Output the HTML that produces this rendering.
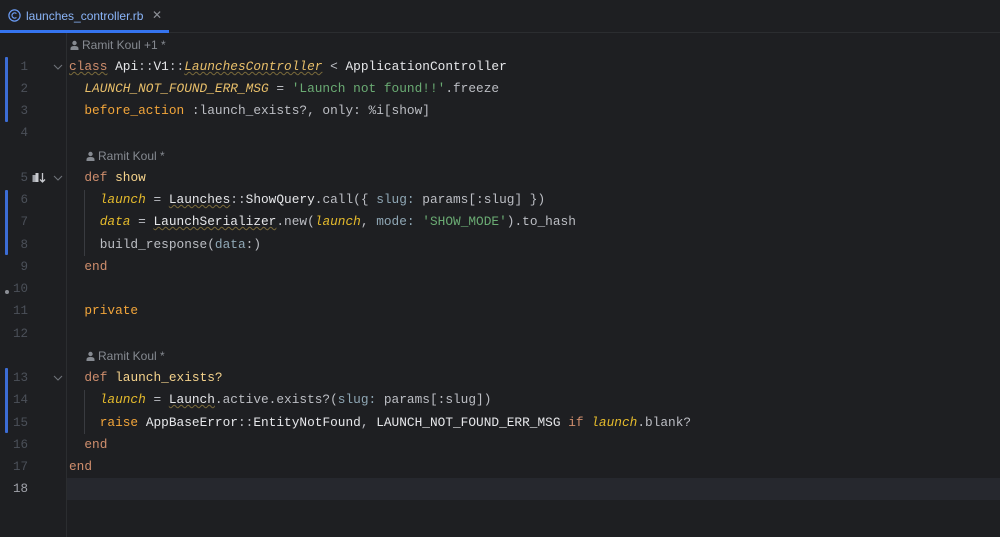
<!DOCTYPE html>
<html><head><meta charset="utf-8"><style>
*{margin:0;padding:0;box-sizing:border-box}
body{width:1000px;height:537px;background:#1e1f22;overflow:hidden;position:relative;font-family:"Liberation Mono",monospace;font-size:12.8px;color:#bcbec4}
.tabbar{position:absolute;left:0;top:0;width:1000px;height:33px;background:#1e1f22;border-bottom:1px solid #2b2d30}
.tab{position:absolute;left:0;top:0;width:169px;height:33px;border-bottom:3px solid #3574f0}
.tab .t{position:absolute;left:26px;top:9px;font-family:"Liberation Sans",sans-serif;font-size:12px;color:#8ab4f8}
.tab .x{position:absolute;left:152px;top:8px;font-family:"Liberation Sans",sans-serif;font-size:12px;color:#8c8f96}
.gutline{position:absolute;left:66px;top:33px;width:1px;height:504px;background:#2b2d30}
.row{position:absolute;left:0;width:1000px;height:22.2px;line-height:22.2px;white-space:pre}
.num{position:absolute;left:0;width:28px;text-align:right;color:#4b5059;font-size:12.5px}
.code{position:absolute;left:69px}
.hint{position:absolute;font-family:"Liberation Sans",sans-serif;font-size:12px;color:#868a91}
.bar{position:absolute;left:5px;width:3px;background:#3c6dd6;border-radius:1px}
.fold{position:absolute;left:53px;top:8px}
.k{color:#cf8e6d}.c{color:#e8bf6a;font-style:italic}.s{color:#6aab73}.m{color:#f2a53a}
.w{color:#e6e7ea}.v{color:#e5bb2c;font-style:italic}.n{color:#8fa7b5}.f{color:#f5d38c}
.u{text-decoration:underline wavy #7a6a3a;text-decoration-thickness:1px}
.cur{background:#26282e}
.guide{position:absolute;left:84px;width:1px;background:#393b40}
.pi{display:inline-block;vertical-align:-1px;margin-right:3px}
</style></head><body>
<div class="tabbar"><div class="tab">
<svg style="position:absolute;left:8px;top:9px" width="13" height="13" viewBox="0 0 13 13"><circle cx="6.5" cy="6.5" r="5.6" fill="none" stroke="#6b9cf5" stroke-width="1.2"/><path d="M8.4 4.6A2.6 2.6 0 1 0 8.4 8.4" fill="none" stroke="#6b9cf5" stroke-width="1.2"/></svg>
<span class="t">launches_controller.rb</span><span class="x">✕</span></div></div>
<div class="gutline"></div>
<div class="bar" style="top:57px;height:65px"></div>
<div class="bar" style="top:190px;height:65px"></div>
<div class="bar" style="top:368px;height:65px"></div>
<div class="guide" style="top:190px;height:66px"></div>
<div class="guide" style="top:390px;height:44px"></div>

<div class="row" style="top:34px"><span class="hint" style="left:70px"><svg class="pi" width="9" height="10" viewBox="0 0 9 10"><circle cx="4.5" cy="3" r="2.2" fill="#868a91"/><path d="M0.5 10V8.5Q0.5 6 4.5 6Q8.5 6 8.5 8.5V10Z" fill="#868a91"/></svg>Ramit Koul +1 *</span></div>
<div class="row" style="top:56px"><span class="num">1</span><svg class="fold" width="10" height="6" viewBox="0 0 10 6"><path d="M1 1L5 5L9 1" fill="none" stroke="#6f737a" stroke-width="1.1"/></svg><span class="code"><span class="k u">class</span> <span class="w">Api</span>::<span class="w">V1</span>::<span class="c u">LaunchesController</span> &lt; <span class="w">ApplicationController</span></span></div>
<div class="row" style="top:78px"><span class="num">2</span><span class="code">  <span class="c">LAUNCH_NOT_FOUND_ERR_MSG</span> = <span class="s">'Launch not found!!'</span>.freeze</span></div>
<div class="row" style="top:100px"><span class="num">3</span><span class="code">  <span class="m">before_action</span> :launch_exists?, only: %i[show]</span></div>
<div class="row" style="top:122px"><span class="num">4</span></div>
<div class="row" style="top:145px"><span class="hint" style="left:86px"><svg class="pi" width="9" height="10" viewBox="0 0 9 10"><circle cx="4.5" cy="3" r="2.2" fill="#868a91"/><path d="M0.5 10V8.5Q0.5 6 4.5 6Q8.5 6 8.5 8.5V10Z" fill="#868a91"/></svg>Ramit Koul *</span></div>
<div class="row" style="top:167px"><span class="num">5</span><svg style="position:absolute;left:32px;top:5px" width="14" height="12" viewBox="0 0 14 12"><rect x="0.5" y="3" width="3" height="7" fill="#a0a3a9"/><rect x="3.5" y="1" width="3" height="9" fill="#c8cacf"/><path d="M10.5 1V10M8 7.5L10.5 10L13 7.5" fill="none" stroke="#c8cacf" stroke-width="1.3"/></svg><svg class="fold" width="10" height="6" viewBox="0 0 10 6"><path d="M1 1L5 5L9 1" fill="none" stroke="#6f737a" stroke-width="1.1"/></svg><span class="code">  <span class="k">def</span> <span class="f">show</span></span></div>
<div class="row" style="top:189px"><span class="num">6</span><span class="code">    <span class="v">launch</span> = <span class="w u">Launches</span>::<span class="w">ShowQuery</span>.call({ <span class="n">slug:</span> params[:slug] })</span></div>
<div class="row" style="top:211px"><span class="num">7</span><span class="code">    <span class="v">data</span> = <span class="w u">LaunchSerializer</span>.new(<span class="v">launch</span>, <span class="n">mode:</span> <span class="s">'SHOW_MODE'</span>).to_hash</span></div>
<div class="row" style="top:234px"><span class="num">8</span><span class="code">    build_response(<span class="n">data</span>:)</span></div>
<div class="row" style="top:256px"><span class="num">9</span><span class="code">  <span class="k">end</span></span></div>
<div class="row" style="top:278px"><span class="num">10</span><span style="position:absolute;left:5px;top:12px;width:4px;height:4px;border-radius:2px;background:#8c8f96"></span></div>
<div class="row" style="top:300px"><span class="num">11</span><span class="code">  <span class="m">private</span></span></div>
<div class="row" style="top:323px"><span class="num">12</span></div>
<div class="row" style="top:345px"><span class="hint" style="left:86px"><svg class="pi" width="9" height="10" viewBox="0 0 9 10"><circle cx="4.5" cy="3" r="2.2" fill="#868a91"/><path d="M0.5 10V8.5Q0.5 6 4.5 6Q8.5 6 8.5 8.5V10Z" fill="#868a91"/></svg>Ramit Koul *</span></div>
<div class="row" style="top:367px"><span class="num">13</span><svg class="fold" width="10" height="6" viewBox="0 0 10 6"><path d="M1 1L5 5L9 1" fill="none" stroke="#6f737a" stroke-width="1.1"/></svg><span class="code">  <span class="k">def</span> <span class="f">launch_exists?</span></span></div>
<div class="row" style="top:389px"><span class="num">14</span><span class="code">    <span class="v">launch</span> = <span class="w u">Launch</span>.active.exists?(<span class="n">slug:</span> params[:slug])</span></div>
<div class="row" style="top:412px"><span class="num">15</span><span class="code">    <span class="m">raise</span> <span class="w">AppBaseError</span>::<span class="w">EntityNotFound</span>, <span class="w">LAUNCH_NOT_FOUND_ERR_MSG</span> <span class="k">if</span> <span class="v">launch</span>.blank?</span></div>
<div class="row" style="top:434px"><span class="num">16</span><span class="code">  <span class="k">end</span></span></div>
<div class="row" style="top:456px"><span class="num">17</span><span class="code"><span class="k">end</span></span></div>
<div class="row cur" style="top:478px;left:67px;width:933px"></div>
<div class="row" style="top:478px"><span class="num" style="color:#a1a3ab">18</span></div>
</body></html>
